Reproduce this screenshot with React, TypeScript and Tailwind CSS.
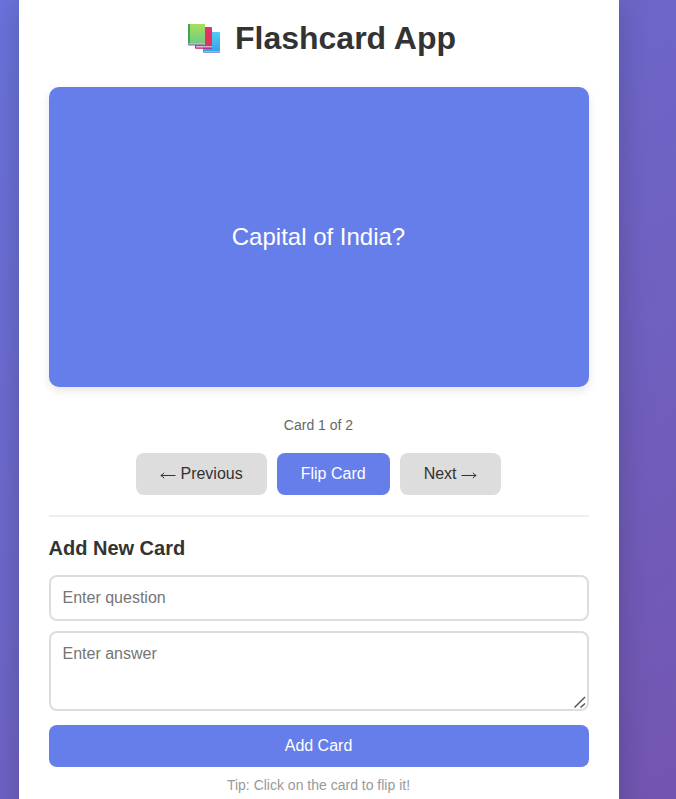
import { useState } from "react";

const cards = [
  { question: "Capital of India?", answer: "New Delhi" },
  { question: "2 + 2 = ?", answer: "4" },
];

function Books() {
  return (
    <svg width="44" height="36" viewBox="0 0 44 36" className="shrink-0" aria-hidden="true">
      <defs>
        <linearGradient id="green" x1="0" y1="0" x2="0" y2="1">
          <stop offset="0" stopColor="#a5e05a" />
          <stop offset="1" stopColor="#74cb83" />
        </linearGradient>
        <linearGradient id="red" x1="0" y1="0" x2="0" y2="1">
          <stop offset="0" stopColor="#e62f70" />
          <stop offset="1" stopColor="#e03550" />
        </linearGradient>
        <linearGradient id="blue" x1="0" y1="0" x2="0" y2="1">
          <stop offset="0" stopColor="#55cdf5" />
          <stop offset="1" stopColor="#35a3ea" />
        </linearGradient>
      </defs>
      <path d="M16 12h16q1 0 1 1v18H16z" fill="url(#blue)" />
      <path d="M16 31h17v1.500H16z" fill="#b5a7dc" />
      <path d="M16 30.500h1v1.500h16v.8H17q-1 0-1-1z" fill="#7588cf" />
      <path d="M8 8q0-1 1-1h15q1 0 1 1v18.500H8z" fill="url(#red)" />
      <path d="M8 26.200h17v1.600H8z" fill="#e2bddb" />
      <path d="M8 25.500h1v2h16v1.200H9q-1 0-1-1z" fill="#b72366" />
      <path d="M1 5q0-1 1-1h15q1 0 1 1v18H1z" fill="url(#green)" />
      <path d="M1 5q0-1 1-1h1v19q-2 0-2 1z" fill="#40a45c" />
      <path d="M1.500 23H18v2H1.500z" fill="#bbb4d4" />
      <path d="M1 23.500h1v1h15.500v.9H2q-1 0-1-1z" fill="#777196" />
    </svg>
  );
}

function Arrow({ right = false }: { right?: boolean }) {
  return (
    <svg
      width="16"
      height="9"
      viewBox="0 0 16 9"
      className={right ? "inline-block -scale-x-100 align-[-1px]" : "inline-block align-[-1px]"}
      fill="none"
      stroke="#333"
      aria-hidden="true"
    >
      <path d="M1 4.500h14.500" />
      <path d="M4 1.800Q3 3.700.8 4.500Q3 5.300 4 7.200" />
    </svg>
  );
}

export default function App() {
  const [index, setIndex] = useState(0);
  const [flipped, setFlipped] = useState(false);
  const move = (step: number) => {
    setFlipped(false);
    setIndex(Math.min(cards.length - 1, Math.max(0, index + step)));
  };
  const button = "h-[42px] rounded-lg px-6 text-base leading-[18px]";
  return (
    <div className="h-[799px] overflow-hidden bg-[linear-gradient(135deg,#667eea_-33%,#764ba2_133%)] pl-[18.5px] font-['Liberation_Sans',Arial,sans-serif] text-[#333]">
      <main className="h-[860px] w-[600px] bg-white px-[30px] pt-[20px] shadow-[0_0_30px_rgba(0,0,0,0.2)]">
        <h1 className="flex h-[37px] items-center justify-center gap-1 pl-1.5 text-[32px] leading-[37px] font-bold">
          <span className="-mt-0.5"><Books /></span>
          <span>Flashcard App</span>
        </h1>
        <div
          onClick={() => setFlipped(!flipped)}
          className="mt-[30px] flex h-[300px] cursor-pointer items-center justify-center rounded-[10px] bg-[#667eea] text-2xl text-white shadow-[0_4px_10px_rgba(0,0,0,0.1)]"
        >
          {flipped ? cards[index].answer : cards[index].question}
        </div>
        <p className="mt-[30px] text-center text-sm leading-4 text-[#666]">
          Card {index + 1} of {cards.length}
        </p>
        <div className="mt-5 flex justify-center gap-2.5">
          <button onClick={() => move(-1)} className={`${button} bg-[#ddd]`}>
            <Arrow /> Previous
          </button>
          <button onClick={() => setFlipped(!flipped)} className={`${button} bg-[#667eea] text-white`}>
            Flip Card
          </button>
          <button onClick={() => move(1)} className={`${button} bg-[#ddd]`}>
            Next <Arrow right />
          </button>
        </div>
        <section className="mt-5 border-t-2 border-[#eee] pt-5">
          <h2 className="text-xl leading-[23px] font-bold">Add New Card</h2>
          <input
            placeholder="Enter question"
            className="mt-[15px] block h-[46px] w-full rounded-lg border-2 border-[#ddd] px-3 text-base placeholder:text-[#757575]"
          />
          <div className="relative mt-2.5">
            <textarea
              placeholder="Enter answer"
              className="block h-20 w-full resize-none rounded-lg border-2 border-[#ddd] p-3 text-base leading-[18px] placeholder:text-[#757575]"
            />
            <svg
              width="12"
              height="12"
              viewBox="0 0 12 12"
              className="pointer-events-none absolute right-[3px] bottom-[3px]"
              stroke="#555"
              strokeWidth="1.500"
              aria-hidden="true"
            >
              <path d="M.5 11.500 11 1M6.500 11.500 11 7.500" />
            </svg>
          </div>
          <button className={`${button} mt-3.5 w-full bg-[#667eea] text-white`}>Add Card</button>
          <p className="mt-2.5 text-center text-sm leading-4 text-[#999]">Tip: Click on the card to flip it!</p>
        </section>
      </main>
    </div>
  );
}
